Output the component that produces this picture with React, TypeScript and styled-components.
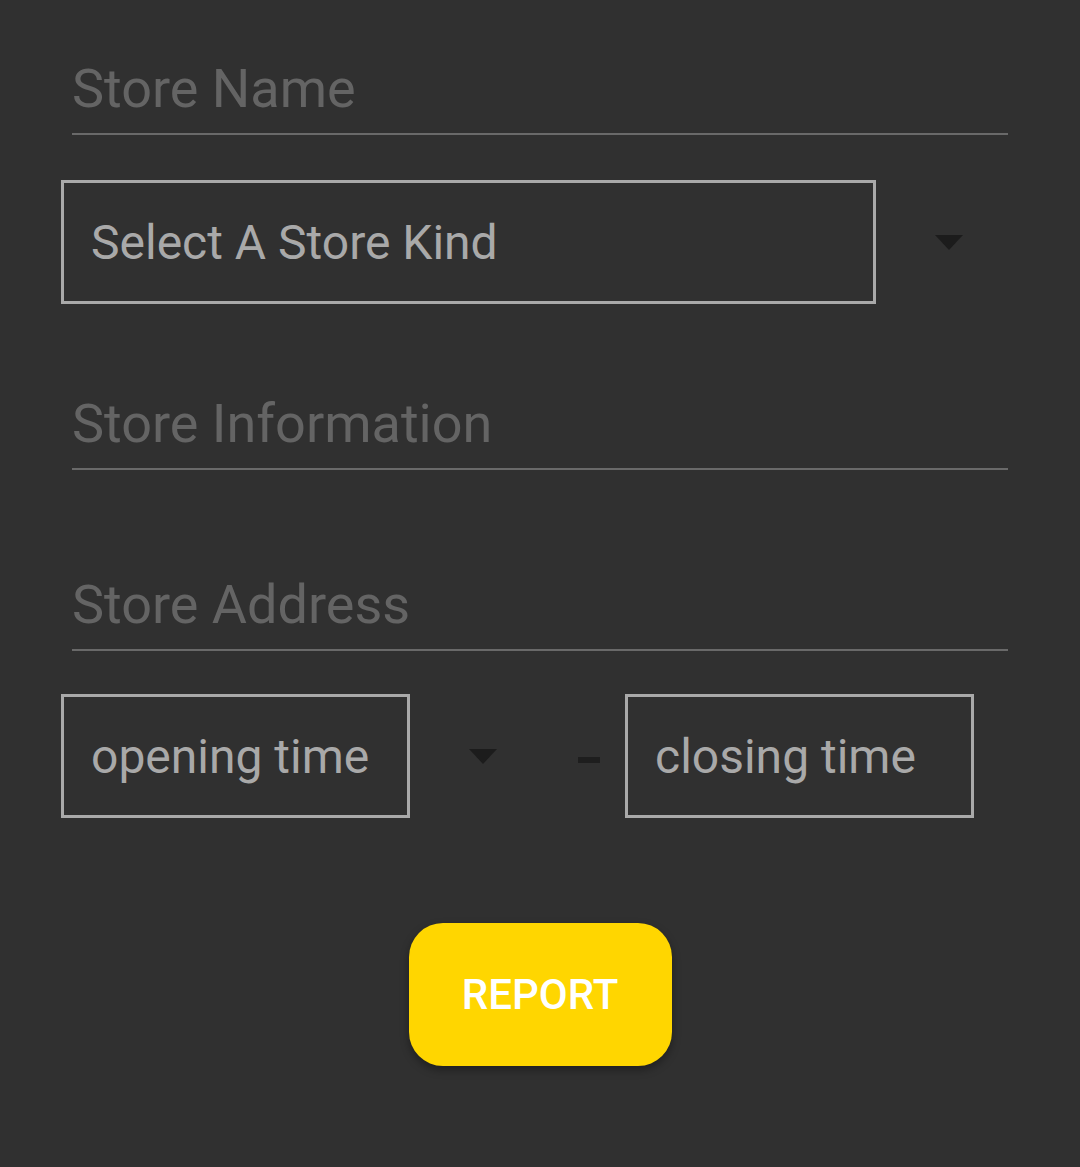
import React from "react";
import styled, { createGlobalStyle } from "styled-components";

const Global = createGlobalStyle`
  html, body { margin: 0; padding: 0; background: #303030; }
  body { font-family: Roboto, "Noto Sans", sans-serif; }
  * { box-sizing: border-box; }
`;

const Page = styled.div`
  width: 1080px;
  min-height: 1167px;
  background: #303030;
  display: flex;
  flex-direction: column;
  padding: 0 72px 0 61px;
`;

const UnderlineField = styled.div<{ $top: number }>`
  margin-top: ${(p) => p.$top}px;
  margin-left: 11px;
  border-bottom: 2px solid #696969;
  padding-bottom: 12px;
  line-height: 64px;
  font-size: 54px;
  color: #646464;
  white-space: nowrap;
`;

const SelectRow = styled.div<{ $top: number }>`
  margin-top: ${(p) => p.$top}px;
  display: flex;
  align-items: center;
`;

const OutlinedBox = styled.div<{ $width: number }>`
  width: ${(p) => p.$width}px;
  height: 124px;
  border: 3px solid #a9a9a9;
  display: flex;
  align-items: center;
  padding-left: 27px;
  font-size: 48px;
  color: #a9a9a9;
  white-space: nowrap;
`;

const Caret = styled.div<{ $gap: number }>`
  margin-left: ${(p) => p.$gap}px;
  width: 0;
  height: 0;
  border-left: 14px solid transparent;
  border-right: 14px solid transparent;
  border-top: 15px solid #1c1c1c;
`;

const Dash = styled.div`
  margin-left: 81px;
  margin-right: 25px;
  width: 22px;
  height: 6px;
  background: #1e1e1e;
  margin-top: 8px;
`;

const ButtonWrap = styled.div`
  margin-top: 105px;
  display: flex;
  justify-content: center;
  margin-left: -61px;
  margin-right: -72px;
`;

const ReportButton = styled.button`
  width: 263px;
  height: 143px;
  border: none;
  border-radius: 34px;
  background: #ffd600;
  color: #ffffff;
  font-family: Roboto, sans-serif;
  font-weight: 500;
  font-size: 42px;
  box-shadow: 0 4px 8px rgba(0, 0, 0, 0.35);
  cursor: pointer;
`;

export default function App() {
  return (
    <>
      <Global />
      <Page>
        <UnderlineField $top={57}>Store Name</UnderlineField>
        <SelectRow $top={45}>
          <OutlinedBox $width={815}>Select A Store Kind</OutlinedBox>
          <Caret $gap={59} />
        </SelectRow>
        <UnderlineField $top={88}>Store Information</UnderlineField>
        <UnderlineField $top={103}>Store Address</UnderlineField>
        <SelectRow $top={43}>
          <OutlinedBox $width={349}>opening time</OutlinedBox>
          <Caret $gap={59} />
          <Dash />
          <OutlinedBox $width={349}>closing time</OutlinedBox>
        </SelectRow>
        <ButtonWrap>
          <ReportButton>REPORT</ReportButton>
        </ButtonWrap>
      </Page>
    </>
  );
}
